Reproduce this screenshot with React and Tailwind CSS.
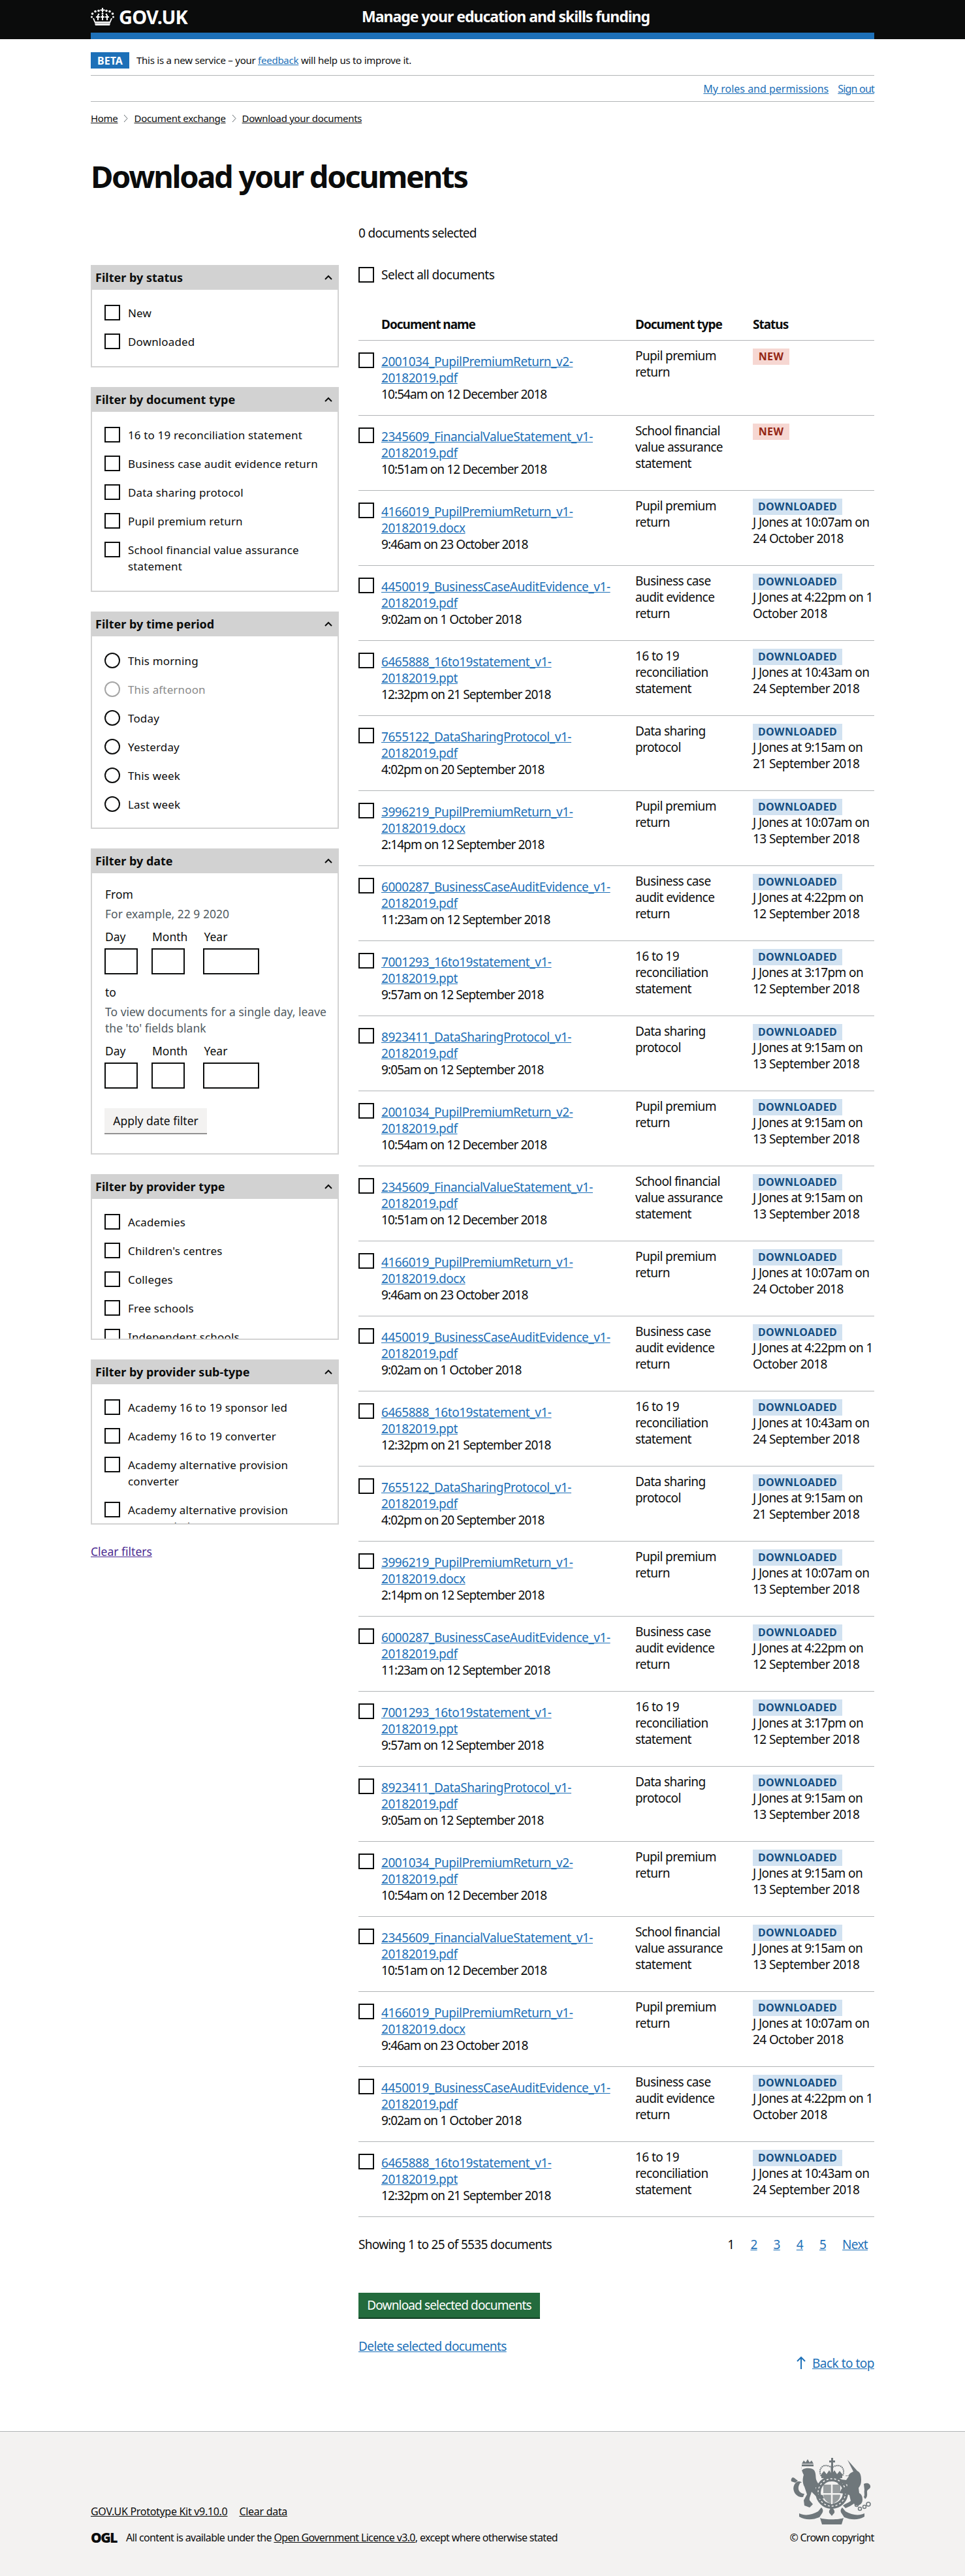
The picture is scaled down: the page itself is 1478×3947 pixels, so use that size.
import React from 'react'

const TYPES = {
  pupil: ['Pupil premium', 'return'],
  school: ['School financial', 'value assurance', 'statement'],
  business: ['Business case', 'audit evidence', 'return'],
  recon: ['16 to 19', 'reconciliation', 'statement'],
  data: ['Data sharing', 'protocol'],
}

const ROWS = [
  ['2001034_PupilPremiumReturn_v2-', '20182019.pdf', '10:54am on 12 December 2018', 'pupil', null],
  ['2345609_FinancialValueStatement_v1-', '20182019.pdf', '10:51am on 12 December 2018', 'school', null],
  ['4166019_PupilPremiumReturn_v1-', '20182019.docx', '9:46am on 23 October 2018', 'pupil', ['J Jones at 10:07am on', '24 October 2018']],
  ['4450019_BusinessCaseAuditEvidence_v1-', '20182019.pdf', '9:02am on 1 October 2018', 'business', ['J Jones at 4:22pm on 1', 'October 2018']],
  ['6465888_16to19statement_v1-', '20182019.ppt', '12:32pm on 21 September 2018', 'recon', ['J Jones at 10:43am on', '24 September 2018']],
  ['7655122_DataSharingProtocol_v1-', '20182019.pdf', '4:02pm on 20 September 2018', 'data', ['J Jones at 9:15am on', '21 September 2018']],
  ['3996219_PupilPremiumReturn_v1-', '20182019.docx', '2:14pm on 12 September 2018', 'pupil', ['J Jones at 10:07am on', '13 September 2018']],
  ['6000287_BusinessCaseAuditEvidence_v1-', '20182019.pdf', '11:23am on 12 September 2018', 'business', ['J Jones at 4:22pm on', '12 September 2018']],
  ['7001293_16to19statement_v1-', '20182019.ppt', '9:57am on 12 September 2018', 'recon', ['J Jones at 3:17pm on', '12 September 2018']],
  ['8923411_DataSharingProtocol_v1-', '20182019.pdf', '9:05am on 12 September 2018', 'data', ['J Jones at 9:15am on', '13 September 2018']],
  ['2001034_PupilPremiumReturn_v2-', '20182019.pdf', '10:54am on 12 December 2018', 'pupil', ['J Jones at 9:15am on', '13 September 2018']],
  ['2345609_FinancialValueStatement_v1-', '20182019.pdf', '10:51am on 12 December 2018', 'school', ['J Jones at 9:15am on', '13 September 2018']],
]
const ALL_ROWS = [...ROWS, ...ROWS.slice(2, 12), ...ROWS.slice(2, 5)]

function Box() {
  return <span className="block h-6 w-6 flex-none border-2 border-[#0b0c0c] bg-white" />
}

function Filter({ title, height, children }) {
  return (
    <section className={`mb-[30px] overflow-hidden border-2 border-t-0 border-[#d3d3d3] ${height}`}>
      <header className="-mx-[2px] flex h-[38px] items-center justify-between bg-[#d2d2d2] pl-[7px] pr-[10px]">
        <h2 className="text-[18px] font-bold text-[#0b0c0c]">{title}</h2>
        <svg width="12" height="8" viewBox="0 0 12 8" fill="none" stroke="#0b0c0c" strokeWidth="2">
          <path d="M1 7l5-5 5 5" />
        </svg>
      </header>
      {children}
    </section>
  )
}

function CheckList({ items }) {
  return (
    <div className="pl-[19px] pt-[23px]">
      {items.map((lines) => (
        <div key={lines[0]} className={`flex items-start ${lines.length > 1 ? 'h-[69px]' : 'h-[44px]'}`}>
          <Box />
          <span className="ml-3 text-[17px] leading-[25px] tracking-[0.15px] text-[#0b0c0c]">
            {lines.map((l) => (
              <span key={l} className="block">{l}</span>
            ))}
          </span>
        </div>
      ))}
    </div>
  )
}

function Radio({ label, disabled }) {
  return (
    <div className="flex h-[44px] items-start">
      <span className={`block h-6 w-6 flex-none rounded-full border-2 ${disabled ? 'border-[#a5a5a5]' : 'border-[#0b0c0c]'}`} />
      <span className={`ml-3 text-[17px] leading-[25px] tracking-[0.15px] ${disabled ? 'text-[#8a8a8a]' : 'text-[#0b0c0c]'}`}>{label}</span>
    </div>
  )
}

function DateFields() {
  const cols = [
    ['Day', 'w-[51px]', 'mr-[21px]'],
    ['Month', 'w-[51px]', 'mr-6'],
    ['Year', 'w-[86px]', ''],
  ]
  return (
    <div className="flex">
      {cols.map(([label, w, m]) => (
        <div key={label} className={m}>
          <div className="h-[25px] pl-px leading-[25px]">{label}</div>
          <div className={`mt-[5px] h-10 border-2 border-[#0b0c0c] ${w}`} />
        </div>
      ))}
    </div>
  )
}

function Tag({ children, blue }) {
  return (
    <span
      className={`inline-block h-[25px] min-w-[56px] px-[8px] text-center text-[16px] font-bold leading-[25px] tracking-[0.4px] ${
        blue ? 'bg-[#d2e2f1] text-[#144e81]' : 'bg-[#f6d7d2] text-[#942514]'
      }`}
    >
      {children}
    </span>
  )
}

function DocRow({ row }) {
  const [name, ext, time, type, by] = row
  return (
    <div className="flex h-[115px] border-b border-[#b1b4b6] text-[19px] leading-[25px] text-[#0b0c0c]">
      <div className="w-[35px] flex-none pt-[18px]">
        <Box />
      </div>
      <div className="w-[389px] flex-none whitespace-nowrap pt-5">
        <a href="#" className="tracking-[-0.45px] text-[#1d70b8] underline">
          {name}
          <br />
          {ext}
        </a>
        <div className="tracking-[-0.9px]">{time}</div>
      </div>
      <div className="w-[180px] flex-none pt-[11px] tracking-[-0.6px]">
        {TYPES[type].map((l) => (
          <div key={l}>{l}</div>
        ))}
      </div>
      <div className="min-w-0 flex-1 whitespace-nowrap pt-[11px] tracking-[-0.6px]">
        <div className="h-[25px]">{by ? <Tag blue>DOWNLOADED</Tag> : <Tag>NEW</Tag>}</div>
        {by && by.map((l) => <div key={l}>{l}</div>)}
      </div>
    </div>
  )
}

function Chevron() {
  return (
    <svg width="7" height="13" viewBox="0 0 7 13" fill="none" stroke="#626a6e" strokeWidth="1" className="mx-[9px]">
      <path d="M1 1l5 5.500-5 5.500" />
    </svg>
  )
}

function Crown() {
  return (
    <svg width="36" height="27" viewBox="0 0 36 27" fill="#fff" aria-hidden="true">
      <path d="M17 0h2v2.500h2.500v2H19V7h-2V4.500h-2.500v-2H17z" />
      <circle cx="2.500" cy="9" r="1.800" />
      <circle cx="33.500" cy="9" r="1.800" />
      <circle cx="7" cy="5.500" r="1.800" />
      <circle cx="29" cy="5.500" r="1.800" />
      <circle cx="12" cy="4.500" r="1.800" />
      <circle cx="24" cy="4.500" r="1.800" />
      <circle cx="1.500" cy="14" r="1.500" />
      <circle cx="34.500" cy="14" r="1.500" />
      <circle cx="18" cy="9" r="1.500" />
      <circle cx="12" cy="10" r="1.300" />
      <circle cx="24" cy="10" r="1.300" />
      <path d="M10 11h2v2h2v2h-2v4h-2v-4H8v-2h2zM17 11h2v2h2v2h-2v4h-2v-4h-2v-2h2zM24 11h2v2h2v2h-2v4h-2v-4h-2v-2h2z" />
      <path d="M3 16h2l2 5h22l2-5h2l-3 7H6z" />
      <path d="M6 23.500h24L29 27H7z" />
    </svg>
  )
}

function CoatOfArms() {
  return (
    <svg width="126" height="102" viewBox="0 0 126 102" fill="#6f777b" aria-hidden="true">
      <path d="M62 0h3v4h3v3h-3v5h-3V7h-3V4h3z" />
      <path d="M47 28c-4-6-2-14 4-16 5-1 9 1 12 3 3-2 7-4 12-3 6 2 8 10 4 16" fill="none" stroke="#6f777b" strokeWidth="2" strokeDasharray="2 1" />
      <path d="M47 25l4-5 4 5 4-6 4 6 4-6 4 6 4-5 4 5v6H47z" />
      <rect x="61.500" y="12" width="3.500" height="14" />
      <circle cx="63" cy="53" r="21" fill="none" stroke="#6f777b" strokeWidth="8" />
      <circle cx="63" cy="53" r="21" fill="none" stroke="#f3f2f1" strokeWidth="1.500" strokeDasharray="3 3" />
      <path d="M50 41h26v15c0 8-6 12-13 15-7-3-13-7-13-15z" opacity=".7" />
      <path d="M61.800 41h2.500v30h-2.500zM50 54h26v2.500H50z" fill="#f3f2f1" />
      <path d="M17 9l3-5 3 3 3-5 3 5 3-3 3 5zM17 10h18v3H17z" />
      <path d="M17 20c1-5 15-6 19-1 3 5 2 9 3 14 1 4 4 7 6 10l-4 3-3-1c1 4 2 8 4 11l7 1 2 5-7 1-4-3-8-8c-1 5-4 9-3 13l5 6-5 5-8-3-1-8 5-9-4-12c-3-5-3-12-1-18-2-4-4-8-3-13z" />
      <path d="M15 38c-4 5-4 11-1 14 2 2 4 3 7 3l-2 5c-6 1-12-3-14-9-2-5 0-11 4-14 3-2 7-1 8 1z" />
      <path d="M1 36c-1-2 0-5 2-6 2 0 3 1 4 2l4 3-4 3z" />
      <path d="M87 3l15 17-3 3-3-2z" />
      <path d="M88 28c2-5 8-8 14-8 5 2 6 8 6 14 0 5-1 8-4 12l1 8c4 2 5 6 5 10 0 6-4 9-9 9-2 0-3-1-4-3-4 3-8 5-13 7l-4-4c4-3 8-4 12-7l-2-9-6-2-9-1 3-7 7 1 2-7-7-2-3 3-5-2 5-7 8 1c1-2 3-4 4-6l-3-1-3 1z" />
      <path d="M112 40c5-3 11 0 10 5-1 3-4 3-5 6 0 5 1 9-3 12l-2-3c2-3 0-7 1-11z" />
      <g fill="none" stroke="#6f777b" strokeWidth="1.500">
        <circle cx="101" cy="72" r="2.500" />
        <circle cx="106" cy="78" r="2.500" />
        <circle cx="113" cy="75" r="2.500" />
        <circle cx="119" cy="71" r="3" />
      </g>
      <path d="M13 85c8 4 19 3 29-3l5-6c3 3 3 6 1 9l-4 6c-10 4-21 5-31-1z" />
      <path d="M113 85c-8 4-19 3-29-3l-5-6c-3 3-3 6-1 9l4 6c10 4 21 5 31-1z" />
      <path d="M45 92c6 3 30 3 36 0l-3 10H48z" />
      <path d="M63 76c2 2 5 4 4 8-1 2-3 3-4 5-1-2-3-3-4-5-1-4 2-6 4-8z" />
    </svg>
  )
}

export default function App() {
  return (
    <div className="min-h-[3947px] bg-white font-['Noto_Sans',Arial,sans-serif] text-[#0b0c0c]">
      <header className="bg-[#0b0c0c]">
        <div className="mx-auto h-[60px] w-[1200px] border-b-[10px] border-[#1d70b8]">
          <div className="flex h-[50px] items-center">
            <div className="flex w-[415px] items-center">
              <Crown />
              <span className="ml-[7px] text-[29px] font-bold leading-none tracking-[-0.8px] text-white">GOV.UK</span>
            </div>
            <span className="text-[23px] font-bold tracking-[-1px] text-white">Manage your education and skills funding</span>
          </div>
        </div>
      </header>

      <div className="mx-auto w-[1200px]">
        <div className="flex h-[56px] items-start border-b border-[#b1b4b6] pt-5">
          <span className="flex h-[25px] w-[59px] items-center justify-center bg-[#1d70b8] text-[16px] font-bold text-white">BETA</span>
          <p className="ml-[11px] text-[15px] leading-[25px] tracking-[-0.25px]">
            This is a new service – your <a href="#" className="text-[#1d70b8] underline">feedback</a> will help us to improve it.
          </p>
        </div>
        <div className="flex h-[40px] items-center justify-end gap-[14px] border-b border-[#b1b4b6] text-[16px] text-[#1d70b8]">
          <a href="#" className="underline">My roles and permissions</a>
          <a href="#" className="tracking-[-0.8px] underline">Sign out</a>
        </div>

        <nav className="mt-[15px] flex h-[20px] items-center text-[15px] tracking-[-0.3px]">
          <a href="#" className="underline">Home</a>
          <Chevron />
          <a href="#" className="underline">Document exchange</a>
          <Chevron />
          <a href="#" className="underline">Download your documents</a>
        </nav>

        <h1 className="mt-[54px] text-[47px] font-bold leading-[50px] tracking-[-2.3px]">Download your documents</h1>

        <div className="mt-[50px] flex items-start">
          <aside className="w-[380px] flex-none pt-[61px]">
            <Filter title="Filter by status" height="h-[157px]">
              <CheckList items={[['New'], ['Downloaded']]} />
            </Filter>
            <Filter title="Filter by document type" height="h-[314px]">
              <CheckList
                items={[
                  ['16 to 19 reconciliation statement'],
                  ['Business case audit evidence return'],
                  ['Data sharing protocol'],
                  ['Pupil premium return'],
                  ['School financial value assurance', 'statement'],
                ]}
              />
            </Filter>
            <Filter title="Filter by time period" height="h-[333px]">
              <div className="pl-[19px] pt-[25px]">
                <Radio label="This morning" />
                <Radio label="This afternoon" disabled />
                <Radio label="Today" />
                <Radio label="Yesterday" />
                <Radio label="This week" />
                <Radio label="Last week" />
              </div>
            </Filter>
            <Filter title="Filter by date" height="h-[469px]">
              <div className="pl-[19px] pt-[20px] text-[17.5px] leading-[25px]">
                <div className="pl-px">From</div>
                <div className="mt-[5px] pl-px text-[#505a5f]">For example, 22 9 2020</div>
                <div className="mt-[10px]"><DateFields /></div>
                <div className="mt-[15px] pl-px">to</div>
                <div className="mt-[5px] whitespace-nowrap pl-px text-[#505a5f]">
                  To view documents for a single day, leave
                  <br />
                  the 'to' fields blank
                </div>
                <div className="mt-[10px]"><DateFields /></div>
                <button className="mt-[30px] block h-10 w-[157px] border-b-2 border-[#929191] bg-[#f3f2f1] text-[17.5px]">Apply date filter</button>
              </div>
            </Filter>
            <Filter title="Filter by provider type" height="h-[254px]">
              <CheckList items={[['Academies'], ["Children's centres"], ['Colleges'], ['Free schools'], ['Independent schools']]} />
            </Filter>
            <Filter title="Filter by provider sub-type" height="h-[253px]">
              <CheckList
                items={[
                  ['Academy 16 to 19 sponsor led'],
                  ['Academy 16 to 19 converter'],
                  ['Academy alternative provision', 'converter'],
                  ['Academy alternative provision', 'sponsor led'],
                ]}
              />
            </Filter>
            <a href="#" className="-mt-[1px] block text-[17.5px] leading-[25px] text-[#4c2c92] underline">Clear filters</a>
          </aside>

          <main className="ml-[30px] min-w-0 flex-1">
            <p className="text-[19px] leading-[25px] tracking-[-0.7px]">0 documents selected</p>
            <div className="mt-[39px] flex items-start">
              <Box />
              <span className="ml-[11px] text-[19px] leading-[25px] tracking-[-0.5px]">Select all documents</span>
            </div>
            <div className="mt-[51px] flex h-[37px] border-b border-[#b1b4b6] text-[19px] font-bold leading-[25px] tracking-[-1px]">
              <div className="w-[35px]" />
              <div className="w-[389px]">Document name</div>
              <div className="w-[180px]">Document type</div>
              <div>Status</div>
            </div>
            {ALL_ROWS.map((row, i) => (
              <DocRow key={i} row={row} />
            ))}
            <div className="mt-[30px] flex h-[25px] items-center justify-between text-[19px] tracking-[-0.7px]">
              <span>Showing 1 to 25 of 5535 documents</span>
              <div className="mr-[10px] flex gap-[25px]">
                <span>1</span>
                {['2', '3', '4', '5'].map((n) => (
                  <a key={n} href="#" className="text-[#1d70b8] underline">{n}</a>
                ))}
                <a href="#" className="text-[#1d70b8] underline">Next</a>
              </div>
            </div>
            <button className="mt-[61px] block h-[40px] w-[278px] border-b-2 border-[#0f3a22] bg-[#236b3d] text-[19px] tracking-[-0.85px] text-white">Download selected documents</button>
            <a href="#" className="mt-[30px] block text-[19px] leading-[25px] tracking-[-0.6px] text-[#1d70b8] underline">Delete selected documents</a>
            <div className="mt-px flex items-center justify-end text-[19px] leading-[25px] tracking-[-0.5px]">
              <svg width="14" height="20" viewBox="0 0 14 20" fill="none" stroke="#1d70b8" strokeWidth="2" className="mr-[10px] -mt-1">
                <path d="M7 20V2M1 8l6-6 6 6" />
              </svg>
              <a href="#" className="text-[#1d70b8] underline">Back to top</a>
            </div>
          </main>
        </div>
      </div>

      <footer className="mt-[91px] border-t border-[#b1b4b6] bg-[#f3f2f1]">
        <div className="mx-auto flex h-[222px] w-[1200px] justify-between pt-[40px] text-[16px]">
          <div className="pt-[72px]">
            <div className="flex gap-[18px] leading-[20px] tracking-[-0.3px]">
              <a href="#" className="underline">GOV.UK Prototype Kit v9.10.0</a>
              <a href="#" className="underline">Clear data</a>
            </div>
            <div className="mt-[20px] flex items-center">
              <span className="text-[21px] font-black leading-[20px] tracking-[-1.5px]">OGL</span>
              <span className="ml-[14px] leading-[20px] tracking-[-0.65px]">
                All content is available under the <a href="#" className="underline">Open Government Licence v3.0</a>, except where otherwise stated
              </span>
            </div>
          </div>
          <div className="flex w-[130px] flex-col items-center">
            <CoatOfArms />
            <span className="mt-[10px] whitespace-nowrap leading-[20px] tracking-[-0.7px]">© Crown copyright</span>
          </div>
        </div>
      </footer>
    </div>
  )
}
